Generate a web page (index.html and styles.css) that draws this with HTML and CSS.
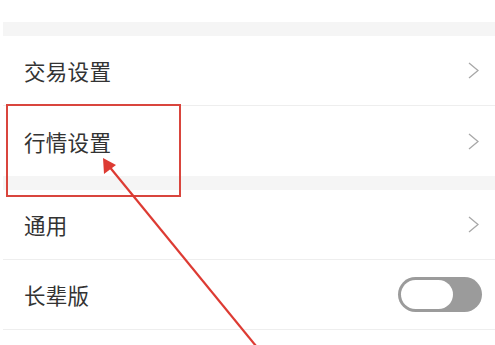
FILE: index.html
```html
<!DOCTYPE html>
<html lang="zh">
<head>
    <meta name="viewport" content="width=device-width, initial-scale=1.0">
    <title>设置</title>
    <link rel="stylesheet" href="styles.css">
</head>
<body>
    <div class="page">
        <div class="top-space"></div>
        <div class="band"></div>

        <div class="row line">
            <span class="label">交易设置</span>
            <svg class="chevron" width="11" height="17" viewBox="0 0 11 17">
                <polyline points="1,1 10,8.5 1,16" fill="none" stroke="#a8a8a8" stroke-width="1.3"/>
            </svg>
        </div>
        <div class="row">
            <span class="label">行情设置</span>
            <svg class="chevron" width="11" height="17" viewBox="0 0 11 17">
                <polyline points="1,1 10,8.5 1,16" fill="none" stroke="#a8a8a8" stroke-width="1.3"/>
            </svg>
        </div>

        <div class="band"></div>

        <div class="row line">
            <span class="label">通用</span>
            <svg class="chevron" width="11" height="17" viewBox="0 0 11 17">
                <polyline points="1,1 10,8.5 1,16" fill="none" stroke="#a8a8a8" stroke-width="1.3"/>
            </svg>
        </div>
        <div class="row line">
            <span class="label">长辈版</span>
            <div class="toggle"><div class="knob"></div></div>
        </div>

        <!-- annotation on top -->
        <div class="mark-box"></div>
        <svg class="arrow" width="495" height="345" viewBox="0 0 495 345">
            <line x1="256" y1="346" x2="108" y2="165" stroke="#dd3b33" stroke-width="2.2"/>
            <polygon points="103,158 104,174 116,165" fill="#dd3b33"/>
        </svg>
    </div>
</body>
</html>
```

FILE: styles.css
```css
*{
    margin: 0;
    padding: 0;
    box-sizing: border-box;
}
body{
    width: 495px;
    height: 345px;
    overflow: hidden;
    background: #fff;
    font-family: "Noto Sans CJK SC", "Noto Sans", sans-serif;
    color: #333;
}
.page{
    position: relative;
    height: 100%;
    padding-left: 3px;
}
.top-space{
    height: 22px;
}
.band{
    height: 14px;
    background-color: #f5f5f5;
}
.row{
    height: 70px;
    display: flex;
    align-items: center;
    justify-content: space-between;
    padding-left: 21px;
    padding-right: 16px;
}
.row.line{
    border-bottom: 1px solid #eeeeee;
}
.label{
    font-size: 21.5px;
    letter-spacing: 0.3px;
}
.chevron{
    display: block;
}
.toggle{
    width: 84px;
    height: 35px;
    border-radius: 18px;
    background-color: #9b9b9b;
    padding: 3px;
    margin-right: -3px;
}
.knob{
    width: 52px;
    height: 29px;
    border-radius: 15px;
    background-color: #fff;
}
.mark-box{
    position: absolute;
    left: 6px;
    top: 104px;
    width: 175px;
    height: 93px;
    border: 2px solid #d9453d;
}
.arrow{
    position: absolute;
    left: 0;
    top: 0;
}
```
